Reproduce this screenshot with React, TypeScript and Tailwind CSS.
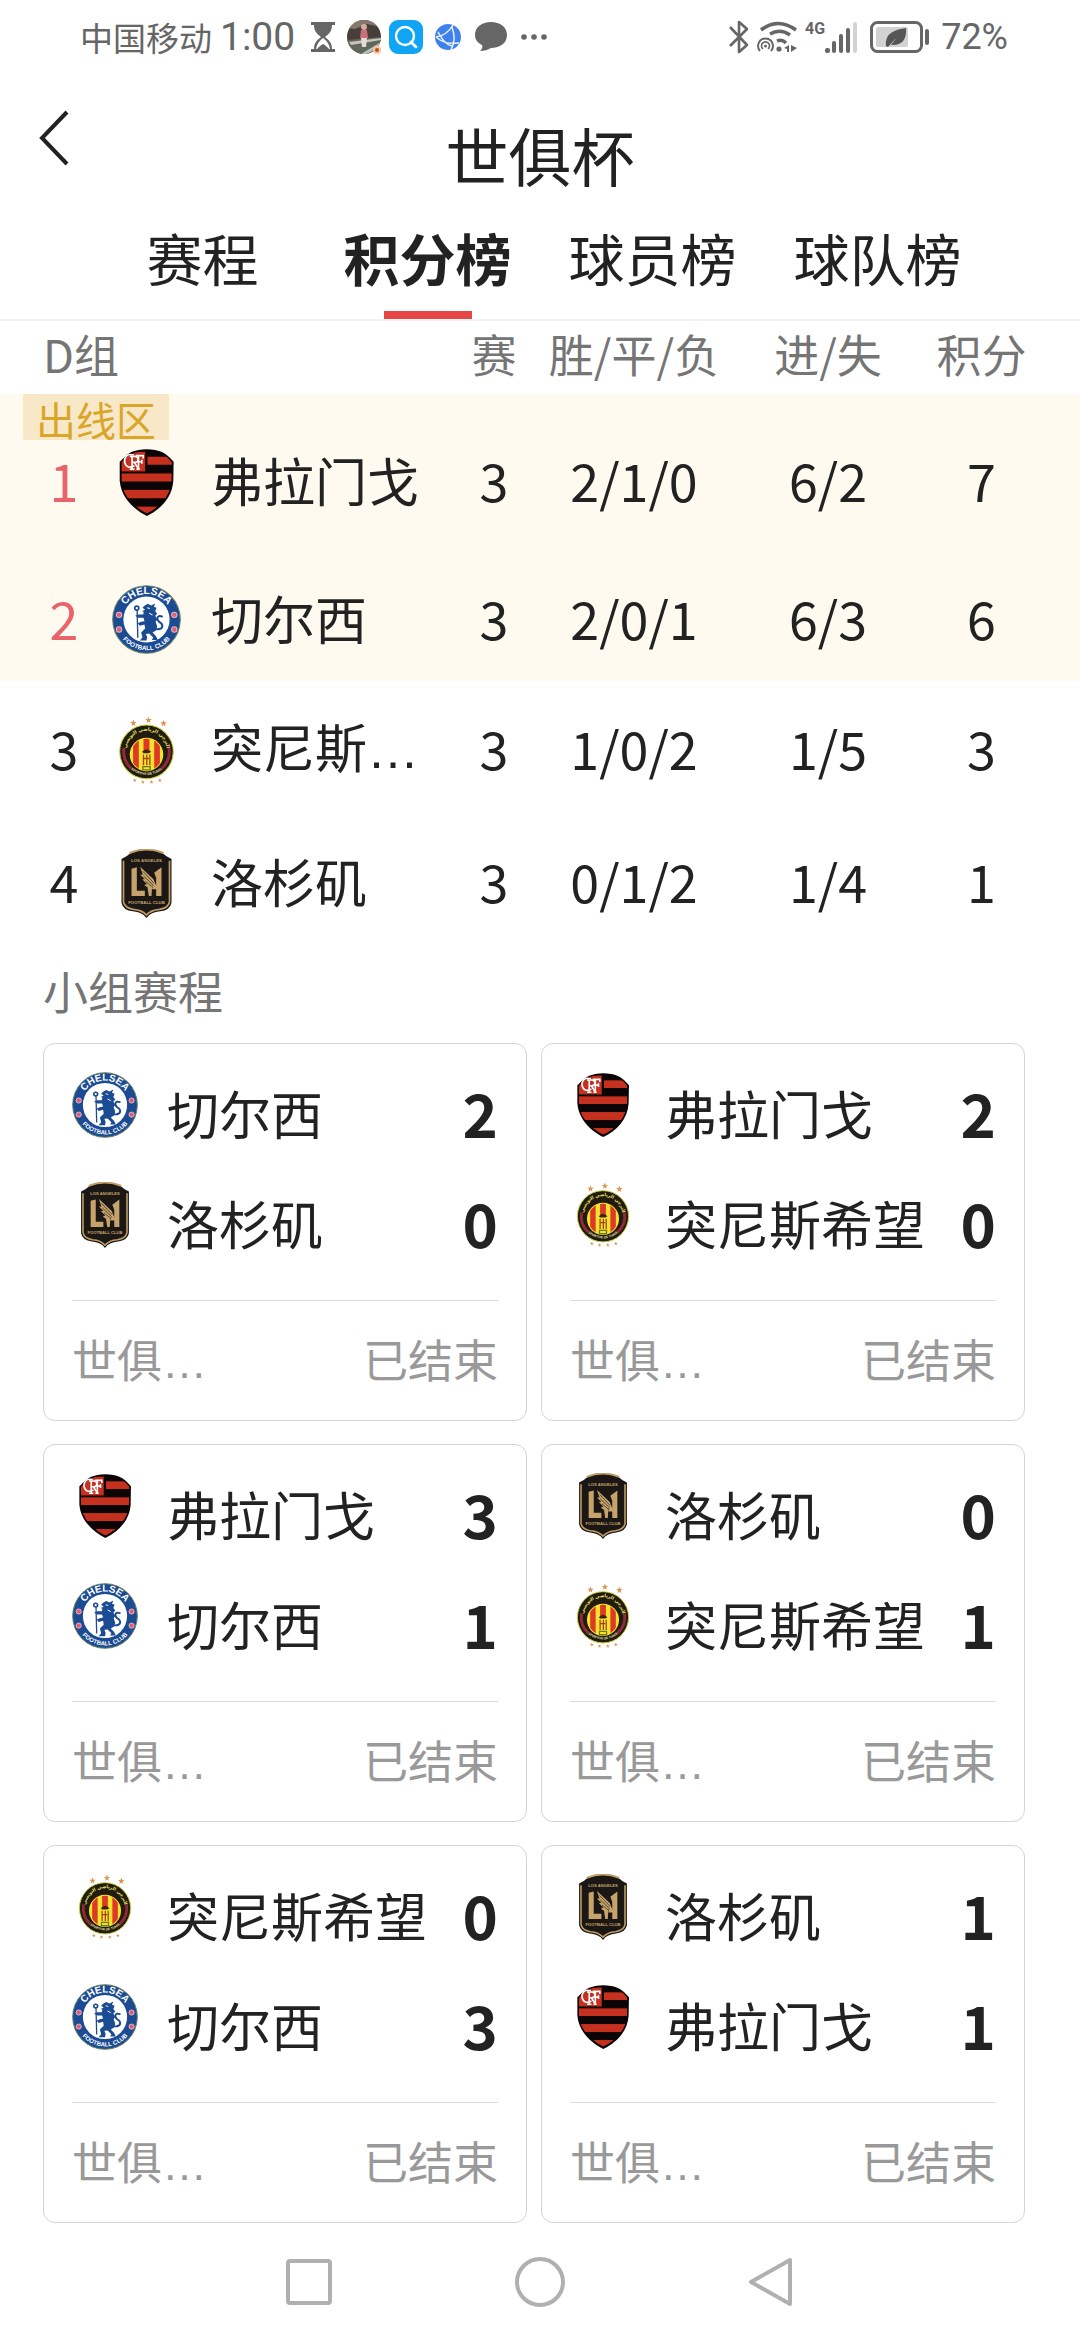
import { useId } from "react";

type TeamKey = "fla" | "che" | "est" | "laf";

function Flamengo() {
  const id = useId();
  return (
    <svg viewBox="5 27 206 206" className="size-full" aria-hidden="true">
      <defs>
        <clipPath id={id}>
          <path d="M33 70 C46 58 54 44 86 38 Q108 35 132 38 C162 44 172 56 184 70 L183 125 C180 170 148 204 109 222 C72 204 36 170 33 125Z" />
        </clipPath>
      </defs>
      <path
        d="M28 68 C43 56 50 39 84 33 Q108 29 134 33 C166 39 176 55 189 68 L188 125 C185 175 150 210 109 230 C70 210 32 175 28 125Z"
        fill="#0b0404"
      />
      <g clipPath={`url(#${id})`} fill="#c5301f">
        <rect x="28" y="38" width="76" height="59" />
        <rect x="111" y="53" width="76" height="24" />
        <rect x="28" y="103" width="160" height="24" />
        <rect x="28" y="152" width="160" height="25" />
        <rect x="28" y="202" width="160" height="30" />
      </g>
      <g fill="none" stroke="#fff" strokeWidth="5">
        <path d="M70 48 C50 42 40 56 43 70 C46 84 58 88 72 80" />
        <path d="M58 90 h14 M65 88 V52 M58 52 h14 C86 52 86 70 72 70 h-8 M72 70 L84 90 M78 90 h10" />
        <path d="M84 92 V50 M76 50 h22 v8 M84 68 h10 M94 62 v12" />
      </g>
    </svg>
  );
}

function Chelsea() {
  const id = useId();
  return (
    <svg viewBox="7 18 206 206" className="size-full" aria-hidden="true">
      <defs>
        <path id={`${id}t`} d="M34 121 A76 76 0 0 1 186 121" />
        <path id={`${id}b`} d="M18 121 A92 92 0 0 0 202 121" />
      </defs>
      <circle cx="110" cy="121" r="101" fill="#1b4b93" stroke="#6f8560" strokeWidth="3" />
      <circle cx="110" cy="121" r="69" fill="#fff" />
      <text fill="#fff" fontFamily="Liberation Sans, sans-serif" fontWeight="700" fontSize="31" textAnchor="middle">
        <textPath href={`#${id}t`} startOffset="50%">CHELSEA</textPath>
      </text>
      <text fill="#fff" fontFamily="Liberation Sans, sans-serif" fontWeight="700" fontSize="19" textAnchor="middle">
        <textPath href={`#${id}b`} startOffset="50%">FOOTBALL CLUB</textPath>
      </text>
      <g fill="#d9607c" stroke="#f0b3bd" strokeWidth="3">
        <circle cx="28" cy="107" r="8" />
        <circle cx="28" cy="151" r="8" />
        <circle cx="193" cy="107" r="8" />
        <circle cx="193" cy="151" r="8" />
      </g>
      <g fill="none" stroke="#1b4b93" strokeLinecap="round">
        <circle cx="81" cy="87" r="6" strokeWidth="5" />
        <path d="M82 95 L84 174" strokeWidth="4" />
        <path d="M137 150 C164 152 160 134 148 128 C138 120 142 106 156 112" strokeWidth="6" />
      </g>
      <path
        d="M104 80 L114 74 L124 79 L136 73 L132 83 L140 86 L136 96 L142 104 L136 110 L142 120 L137 128 L142 142 L138 154 L128 160 L138 170 L144 182 L126 182 L130 175 L118 163 L108 164 L112 174 L110 184 L90 184 L98 175 L94 160 L106 148 L104 136 L90 140 L84 132 L94 128 L104 126 L101 116 L86 116 L76 110 L86 106 L100 106 L102 98 L96 96 L106 92 L98 86Z"
        fill="#1b4b93"
      />
      <path d="M112 86 L120 88 M118 102 L128 108" stroke="#fff" strokeWidth="3" />
    </svg>
  );
}

const STAR = "M0 -10 L3 -3 L10 -3 L4 2 L6 9 L0 5 L-6 9 L-4 2 L-10 -3 L-3 -3Z";

function Esperance() {
  const id = useId();
  return (
    <svg viewBox="4 23 206 206" className="size-full" aria-hidden="true">
      <defs>
        <path id={`${id}t`} d="M46 128 A61 61 0 0 1 168 128" />
        <path id={`${id}b`} d="M36 128 A71 71 0 0 0 178 128" />
        <clipPath id={`${id}c`}>
          <circle cx="107" cy="138" r="47" />
        </clipPath>
      </defs>
      <g fill="#dd9552">
        <path d={STAR} transform="translate(68 44)" />
        <path d={STAR} transform="translate(113 35)" />
        <path d={STAR} transform="translate(158 45)" />
        <path d={STAR} transform="translate(72 215) scale(0.6)" />
        <path d={STAR} transform="translate(96 220) scale(0.6)" />
        <path d={STAR} transform="translate(122 220) scale(0.6)" />
        <path d={STAR} transform="translate(147 215) scale(0.6)" />
      </g>
      <circle cx="107" cy="130" r="80" fill="#221c10" stroke="#c9cf3c" strokeWidth="3" />
      <path d="M40 118 A68 68 0 0 0 62 180 M174 118 A68 68 0 0 1 152 180" fill="none" stroke="#8f2a3c" strokeWidth="9" />
      <circle cx="107" cy="138" r="50" fill="#f7e22e" />
      <g clipPath={`url(#${id}c)`} fill="#dc3a26">
        <rect x="67" y="88" width="17" height="100" />
        <rect x="98" y="88" width="18" height="38" />
        <rect x="130" y="88" width="17" height="100" />
      </g>
      <path d="M94 130 Q106 116 121 130 L114 134 L98 134Z" fill="#3a2410" />
      <path d="M98 138 v32 M108 138 v32 M117 138 v32 M98 150 h16" stroke="#a3401c" strokeWidth="4" />
      <path d="M96 174 h22 v10 h-22z" fill="none" stroke="#6f7a1c" strokeWidth="4" />
      <text fill="#efe76a" fontFamily="DejaVu Sans, sans-serif" fontWeight="700" fontSize="14" textAnchor="middle">
        <textPath href={`#${id}t`} startOffset="50%">الترجي الرياضي التونسي</textPath>
      </text>
      <text fill="#e8e3b0" fontFamily="Liberation Sans, sans-serif" fontWeight="700" fontSize="10" textAnchor="middle">
        <textPath href={`#${id}b`} startOffset="50%">SPORTIVE DE TUNIS</textPath>
      </text>
    </svg>
  );
}

function LosAngeles() {
  return (
    <svg viewBox="8 25 206 207" className="size-full" aria-hidden="true">
      <path
        d="M36 55 Q52 48 64 36 Q111 16 158 36 Q170 48 186 55 V186 Q182 208 152 212 Q124 214 111 232 Q98 214 70 212 Q40 208 36 186Z"
        fill="#1b1714"
      />
      <path
        d="M42 60 V184 Q46 202 72 206 Q98 208 111 223 Q124 208 150 206 Q176 202 180 184 V60"
        fill="none"
        stroke="#bf9d66"
        strokeWidth="5"
      />
      <path d="M60 37 Q111 16 162 37" fill="none" stroke="#bf9d66" strokeWidth="6" />
      <g fill="#c6a36a">
        <path d="M66 84 L82 80 V150 H106 V166 H66Z" />
        <path d="M134 96 L156 80 V166 H140 V146 H128 V134 L140 138 V112Z" />
        <path d="M92 78 L132 116 L144 144 L128 134 L126 166 L118 166 L114 140 L104 134 L112 130 L98 116 L106 116 L92 102 L100 102Z" />
      </g>
      <path d="M100 92 L134 128 M102 106 L132 134 M108 122 L130 140" stroke="#1b1714" strokeWidth="2" />
      <g fill="#c6a36a" fontFamily="Liberation Sans, sans-serif" fontWeight="700" fontSize="13" textAnchor="middle">
        <text x="111" y="65">LOS ANGELES</text>
        <text x="111" y="189">FOOTBALL CLUB</text>
      </g>
    </svg>
  );
}

const TEAMS: Record<TeamKey, { name: string; Crest: () => React.JSX.Element }> = {
  fla: { name: "弗拉门戈", Crest: Flamengo },
  che: { name: "切尔西", Crest: Chelsea },
  est: { name: "突尼斯希望", Crest: Esperance },
  laf: { name: "洛杉矶", Crest: LosAngeles },
};

type Standing = { rank: number; team: TeamKey; label?: string; record: string; goals: string; points: number; row: string };

const QUALIFIED: Standing[] = [
  { rank: 1, team: "fla", record: "2/1/0", goals: "6/2", points: 7, row: "h-[156px] *:pt-5" },
  { rank: 2, team: "che", record: "2/0/1", goals: "6/3", points: 6, row: "h-[131px] *:pt-2" },
];
const OTHERS: Standing[] = [
  { rank: 3, team: "est", label: "突尼斯", record: "1/0/2", goals: "1/5", points: 3, row: "h-[138px]" },
  { rank: 4, team: "laf", record: "0/1/2", goals: "1/4", points: 1, row: "h-[128px]" },
];

const MATCHES: [TeamKey, number, TeamKey, number][] = [
  ["che", 2, "laf", 0],
  ["fla", 2, "est", 0],
  ["fla", 3, "che", 1],
  ["laf", 0, "est", 1],
  ["est", 0, "che", 3],
  ["laf", 1, "fla", 1],
];

function Dots() {
  return <span className="font-['Liberation_Sans']">…</span>;
}

function StatusBar() {
  return (
    <div className="flex h-[74px] items-center justify-between pr-[72px] pl-20 text-[#666]">
      <div className="flex items-center">
        <span className="text-[33px] leading-10">中国移动</span>
        <span className="ml-2 font-[Roboto] text-[39px] leading-10">1:00</span>
        <svg viewBox="0 0 24 30" className="ml-4 h-[30px] w-6" fill="#666" aria-hidden="true">
          <path d="M0 0H24V3H21C21 9 18 12 14 15C18 18 21 21 21 27H24V30H0V27H3C3 21 6 18 10 15C6 12 3 9 3 3H0Z" />
          <path d="M12 16C8 19 6 22 5 27H6C9 24 10 23 12 22C14 23 15 24 18 27H19C18 22 16 19 12 16Z" fill="#fff" />
        </svg>
        <svg viewBox="0 0 34 34" className="ml-3 size-[34px]" aria-hidden="true">
          <clipPath id="avatar"><circle cx="17" cy="17" r="17" /></clipPath>
          <g clipPath="url(#avatar)">
            <rect width="34" height="34" fill="#473d39" />
            <path d="M0 0H34V7L20 4L8 9L0 8Z" fill="#85786f" />
            <path d="M0 20L34 17V34H0Z" fill="#62675b" />
            <path d="M2 22L34 18V20L4 25Z" fill="#c9c4b8" />
            <path d="M14 34L34 22V26L20 34Z" fill="#b9c3bd" />
            <circle cx="17" cy="7" r="3" fill="#d8a9a0" />
            <path d="M14 10H20L21 18H13Z" fill="#c96f7b" />
            <path d="M14 18H20L19 27H15Z" fill="#e3dcd6" />
          </g>
          <circle cx="30" cy="30" r="4" fill="#f6c79a" />
          <circle cx="30" cy="30" r="2" fill="#b8521e" />
        </svg>
        <svg viewBox="0 0 34 34" className="ml-2 size-[34px]" aria-hidden="true">
          <rect width="34" height="34" rx="9" fill="#10a4f4" />
          <circle cx="16" cy="16" r="9" fill="none" stroke="#fff" strokeWidth="2.4" />
          <path d="M22 22L27 27" stroke="#fff" strokeWidth="2.8" strokeLinecap="round" />
        </svg>
        <svg viewBox="0 0 26 26" className="ml-3 size-[26px]" aria-hidden="true">
          <circle cx="13" cy="13" r="13" fill="#3f82ee" />
          <path d="M1 13C8 12 14 8 18 1M1 13C8 19 13 20 24 19M17 3C20 12 20 18 16 26M3 8C8 16 10 20 17 22" fill="none" stroke="#e8f1ff" strokeWidth="1.5" />
        </svg>
        <svg viewBox="0 0 32 30" className="ml-[14px] h-[30px] w-8" fill="#666" aria-hidden="true">
          <path d="M16 0C25 0 32 5 32 13C32 21 25 26 16 26C13 28 9 29 5 29C7 27 8 25 7 23C3 21 0 18 0 13C0 5 7 0 16 0Z" />
        </svg>
        <svg viewBox="0 0 26 6" className="ml-[14px] h-[6px] w-[26px]" fill="#666" aria-hidden="true">
          <circle cx="3" cy="3" r="2.8" /><circle cx="13" cy="3" r="2.8" /><circle cx="23" cy="3" r="2.8" />
        </svg>
      </div>
      <div className="flex items-center">
        <svg viewBox="0 0 20 34" className="h-[34px] w-5" fill="none" stroke="#666" strokeWidth="2.6" strokeLinejoin="round" aria-hidden="true">
          <path d="M1 7L18 25L10 32V2L18 9L1 26" />
        </svg>
        <svg viewBox="0 0 40 32" className="ml-2 h-8 w-10" fill="none" stroke="#666" strokeWidth="3" aria-hidden="true">
          <path d="M4 9Q21 -4 39 9" strokeWidth="3.6" />
          <path d="M13 13Q23 7 33 14" strokeWidth="3.4" />
          <path d="M20 20Q25 18 29 22" strokeWidth="3.4" />
          <circle cx="22" cy="28" r="2.6" fill="#666" stroke="none" />
          <path d="M3 30A7.500 7.500 0 1 1 14 30" strokeWidth="2" />
          <path d="M6 28A4 4 0 1 1 11 28" strokeWidth="1.600" />
          <circle cx="8.500" cy="25" r="1.500" fill="#666" stroke="none" />
          <path d="M27 27L32 24V31H30V28ZM34 24V31L40 27Z" fill="#666" stroke="none" />
        </svg>
        <span className="ml-2 self-start pt-1 font-[Roboto] text-base leading-4 font-bold">4G</span>
        <svg viewBox="0 0 33 31" className="h-[31px] w-[33px]" fill="#666" aria-hidden="true">
          <rect x="0" y="26" width="5" height="5" rx="2" />
          <rect x="7" y="19" width="4" height="12" rx="2" />
          <rect x="14" y="12" width="4" height="19" rx="2" />
          <rect x="21" y="6" width="4" height="25" rx="2" />
          <rect x="28" y="0" width="4" height="31" rx="2" fill="#d2d2d2" />
        </svg>
        <svg viewBox="0 0 60 32" className="ml-3 h-8 w-[60px]" aria-hidden="true">
          <rect x="1.500" y="1.500" width="50" height="29" rx="6" fill="none" stroke="#666" strokeWidth="3" />
          <rect x="6" y="6" width="32" height="20" rx="2" fill="#d2d2d2" />
          <path d="M16 25C15 12 24 9 36 7C37 18 32 25 21 24L27 16L18 26Z" fill="#555" />
          <rect x="55" y="8" width="4" height="16" rx="2" fill="#666" />
        </svg>
        <span className="ml-[11px] font-[Roboto] text-[36px] leading-10">72%</span>
      </div>
    </div>
  );
}

function Row({ s, hot }: { s: Standing; hot?: boolean }) {
  const { name, Crest } = TEAMS[s.team];
  return (
    <tr className={s.row}>
      <td className={hot ? "pb-1 pl-4 text-[#e9636b]" : "pb-1 pl-4"}>{s.rank}</td>
      <td>
        <div className="size-[69px]"><Crest /></div>
      </td>
      <td className="pb-1 text-left whitespace-nowrap">
        {s.label ? <>{s.label}<Dots /></> : name}
      </td>
      <td className="pb-1">3</td>
      <td className="pb-1">{s.record}</td>
      <td className="pb-1">{s.goals}</td>
      <td className="pr-[49px] pb-1">{s.points}</td>
    </tr>
  );
}

function Side({ team, score }: { team: TeamKey; score: number }) {
  const { name, Crest } = TEAMS[team];
  return (
    <div className="flex h-[110px]">
      <div className="size-[66px] shrink-0"><Crest /></div>
      <span className="ml-[29px] flex-1 pt-2 text-[52px] leading-[66px] whitespace-nowrap">{name}</span>
      <span className="pt-2 text-[60px] leading-[64px] font-bold">{score}</span>
    </div>
  );
}

function MatchCard({ match }: { match: [TeamKey, number, TeamKey, number] }) {
  return (
    <article className="h-[378px] rounded-xl border border-[#d4d4d4] px-7 pt-7">
      <Side team={match[0]} score={match[1]} />
      <Side team={match[2]} score={match[3]} />
      <div className="mt-2 flex justify-between border-t border-[#dcdcdc] pt-7 text-[45px] leading-[60px] text-[#999]">
        <span>世俱<Dots /></span>
        <span>已结束</span>
      </div>
    </article>
  );
}

const TABS = ["赛程", "积分榜", "球员榜", "球队榜"];

export default function App() {
  return (
    <div className="min-h-screen bg-white font-['Noto_Sans_CJK_SC',sans-serif] text-[#222]">
      <StatusBar />
      <header className="flex items-start px-6 pt-6">
        <button type="button" aria-label="返回" className="flex h-20 w-[60px] items-center justify-center">
          <svg viewBox="0 0 30 56" className="h-14 w-[30px]" fill="none" stroke="#222" strokeWidth="4" aria-hidden="true">
            <path d="M28 2L3 28L28 54" />
          </svg>
        </button>
        <h1 className="flex-1 pt-2 text-center text-[63px] leading-[96px]">世俱杯</h1>
        <div className="w-[60px]" />
      </header>
      <nav className="grid grid-cols-4 border-b-2 border-[#f3f3f3] px-[90px]">
        {TABS.map((t) => (
          <button
            key={t}
            type="button"
            className={
              t === "积分榜"
                ? "relative flex h-[117px] items-center justify-center pb-2 text-[56px] leading-[72px] font-bold"
                : "flex h-[117px] items-center justify-center pb-2 text-[56px] leading-[72px]"
            }
          >
            {t}
            {t === "积分榜" && <span className="absolute bottom-0 left-1/2 h-2 w-[88px] -translate-x-1/2 bg-[#e54545]" />}
          </button>
        ))}
      </nav>
      <main>
        <div className="relative">
          <table className="w-full table-fixed text-center text-[52px] leading-[72px]">
            <colgroup>
              <col className="w-28" />
              <col className="w-[99px]" />
              <col />
              <col className="w-[100px]" />
              <col className="w-[180px]" />
              <col className="w-[208px]" />
              <col className="w-[148px]" />
            </colgroup>
            <thead>
              <tr className="h-[73px] text-[45px] leading-[60px] text-[#757575] *:pb-2 *:font-normal">
                <th scope="col" colSpan={3} className="pl-[43px] text-left">D组</th>
                <th scope="col">赛</th>
                <th scope="col">胜/平/负</th>
                <th scope="col">进/失</th>
                <th scope="col" className="pr-[49px]">积分</th>
              </tr>
            </thead>
            <tbody className="bg-[#fefaf0]">
              {QUALIFIED.map((s) => <Row key={s.rank} s={s} hot />)}
            </tbody>
            <tbody>
              {OTHERS.map((s) => <Row key={s.rank} s={s} />)}
            </tbody>
          </table>
          <span className="absolute top-[73px] left-[23px] h-[46px] bg-[#f8e8c8] px-[13px] text-[40px] leading-[50px] text-[#d9a62a]">
            出线区
          </span>
        </div>
        <section className="pr-[55px] pl-[43px]">
          <h2 className="pt-3 pb-5 text-[45px] leading-[64px] text-[#757575]">小组赛程</h2>
          <div className="grid grid-cols-2 gap-x-[14px] gap-y-[23px]">
            {MATCHES.map((m, i) => <MatchCard key={i} match={m} />)}
          </div>
        </section>
      </main>
      <footer className="grid grid-cols-3 justify-items-center px-[193px] pt-[34px] pb-8">
        <button type="button" aria-label="最近任务">
          <svg viewBox="0 0 50 50" className="size-[50px]" fill="none" stroke="#b0b0b0" strokeWidth="4" aria-hidden="true">
            <rect x="4" y="4" width="42" height="42" rx="2" />
          </svg>
        </button>
        <button type="button" aria-label="主页">
          <svg viewBox="0 0 50 50" className="size-[50px]" fill="none" stroke="#b0b0b0" strokeWidth="4" aria-hidden="true">
            <circle cx="25" cy="25" r="23" />
          </svg>
        </button>
        <button type="button" aria-label="后退">
          <svg viewBox="0 0 50 50" className="size-[50px]" fill="none" stroke="#b0b0b0" strokeWidth="4" strokeLinejoin="round" aria-hidden="true">
            <path d="M44 3V47L5 25Z" />
          </svg>
        </button>
      </footer>
    </div>
  );
}
